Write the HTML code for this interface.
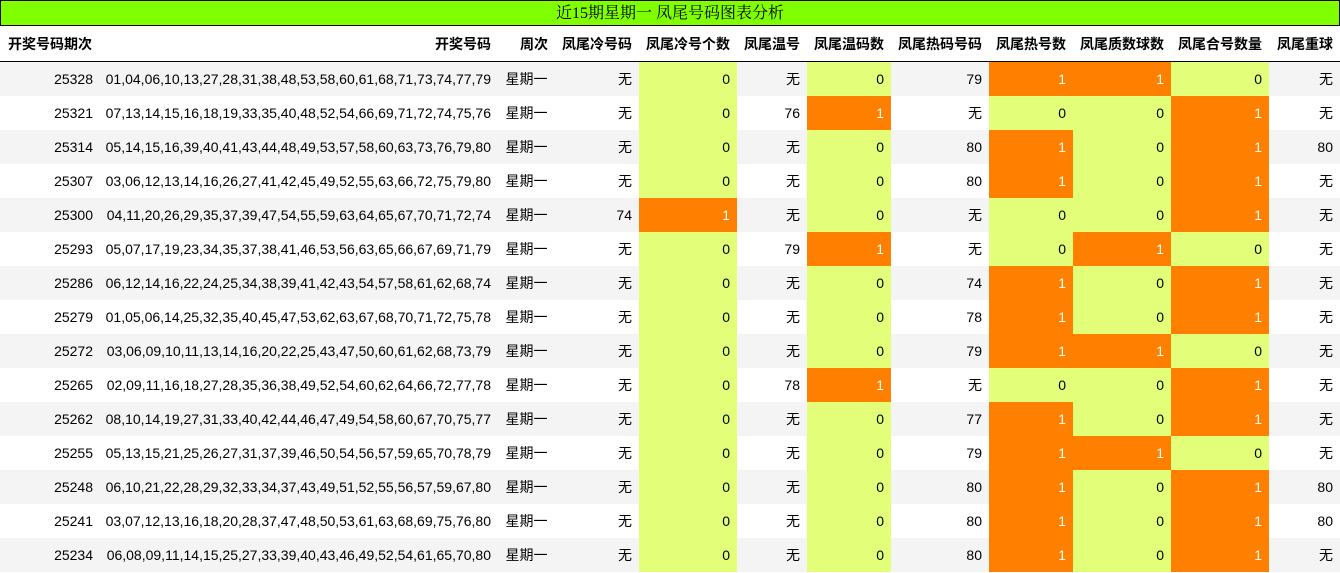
<!DOCTYPE html>
<html><head><meta charset="utf-8"><style>
body{margin:0;width:1340px;height:573px;overflow:hidden;background:#fff;font-family:"Liberation Sans","Noto Sans CJK SC",sans-serif;font-size:14px;color:#000}
.t{position:absolute;left:0;top:0;width:1338px;height:24px;background:#7fff00;border:1px solid #000;text-align:center;font-family:"Liberation Serif","Noto Serif CJK SC",serif;font-size:16px;line-height:26px}
table{position:absolute;left:0;top:26px;border-collapse:collapse;table-layout:fixed;width:1340px}
th{height:35px;font-weight:bold;text-align:right;padding:0 7px 0 0;border-bottom:1px solid #000;white-space:nowrap}
th.l{text-align:left;padding-left:8px}
td{height:34px;padding:0 7px 0 0;text-align:right;white-space:nowrap}
td.c{text-align:center;padding:0}
tr:nth-child(odd) td{background:#f4f4f4}
tr:nth-child(even) td{background:#fff}
tr td.y{background:#e3ff7a}
tr td.o{background:#ff8000;color:#fff}
</style></head><body>
<div class="t">近15期星期一 凤尾号码图表分析</div>
<table>
<colgroup><col style="width:100px"><col style="width:398px"><col style="width:57px"><col style="width:84px"><col style="width:98px"><col style="width:70px"><col style="width:84px"><col style="width:98px"><col style="width:84px"><col style="width:98px"><col style="width:98px"><col style="width:71px"></colgroup>
<thead><tr><th class="l">开奖号码期次</th><th>开奖号码</th><th>周次</th><th>凤尾冷号码</th><th>凤尾冷号个数</th><th>凤尾温号</th><th>凤尾温码数</th><th>凤尾热码号码</th><th>凤尾热号数</th><th>凤尾质数球数</th><th>凤尾合号数量</th><th>凤尾重球</th></tr></thead>
<tbody>
<tr><td>25328</td><td>01,04,06,10,13,27,28,31,38,48,53,58,60,61,68,71,73,74,77,79</td><td class="c">星期一</td><td>无</td><td class="y">0</td><td>无</td><td class="y">0</td><td>79</td><td class="o">1</td><td class="o">1</td><td class="y">0</td><td>无</td></tr>
<tr><td>25321</td><td>07,13,14,15,16,18,19,33,35,40,48,52,54,66,69,71,72,74,75,76</td><td class="c">星期一</td><td>无</td><td class="y">0</td><td>76</td><td class="o">1</td><td>无</td><td class="y">0</td><td class="y">0</td><td class="o">1</td><td>无</td></tr>
<tr><td>25314</td><td>05,14,15,16,39,40,41,43,44,48,49,53,57,58,60,63,73,76,79,80</td><td class="c">星期一</td><td>无</td><td class="y">0</td><td>无</td><td class="y">0</td><td>80</td><td class="o">1</td><td class="y">0</td><td class="o">1</td><td>80</td></tr>
<tr><td>25307</td><td>03,06,12,13,14,16,26,27,41,42,45,49,52,55,63,66,72,75,79,80</td><td class="c">星期一</td><td>无</td><td class="y">0</td><td>无</td><td class="y">0</td><td>80</td><td class="o">1</td><td class="y">0</td><td class="o">1</td><td>无</td></tr>
<tr><td>25300</td><td>04,11,20,26,29,35,37,39,47,54,55,59,63,64,65,67,70,71,72,74</td><td class="c">星期一</td><td>74</td><td class="o">1</td><td>无</td><td class="y">0</td><td>无</td><td class="y">0</td><td class="y">0</td><td class="o">1</td><td>无</td></tr>
<tr><td>25293</td><td>05,07,17,19,23,34,35,37,38,41,46,53,56,63,65,66,67,69,71,79</td><td class="c">星期一</td><td>无</td><td class="y">0</td><td>79</td><td class="o">1</td><td>无</td><td class="y">0</td><td class="o">1</td><td class="y">0</td><td>无</td></tr>
<tr><td>25286</td><td>06,12,14,16,22,24,25,34,38,39,41,42,43,54,57,58,61,62,68,74</td><td class="c">星期一</td><td>无</td><td class="y">0</td><td>无</td><td class="y">0</td><td>74</td><td class="o">1</td><td class="y">0</td><td class="o">1</td><td>无</td></tr>
<tr><td>25279</td><td>01,05,06,14,25,32,35,40,45,47,53,62,63,67,68,70,71,72,75,78</td><td class="c">星期一</td><td>无</td><td class="y">0</td><td>无</td><td class="y">0</td><td>78</td><td class="o">1</td><td class="y">0</td><td class="o">1</td><td>无</td></tr>
<tr><td>25272</td><td>03,06,09,10,11,13,14,16,20,22,25,43,47,50,60,61,62,68,73,79</td><td class="c">星期一</td><td>无</td><td class="y">0</td><td>无</td><td class="y">0</td><td>79</td><td class="o">1</td><td class="o">1</td><td class="y">0</td><td>无</td></tr>
<tr><td>25265</td><td>02,09,11,16,18,27,28,35,36,38,49,52,54,60,62,64,66,72,77,78</td><td class="c">星期一</td><td>无</td><td class="y">0</td><td>78</td><td class="o">1</td><td>无</td><td class="y">0</td><td class="y">0</td><td class="o">1</td><td>无</td></tr>
<tr><td>25262</td><td>08,10,14,19,27,31,33,40,42,44,46,47,49,54,58,60,67,70,75,77</td><td class="c">星期一</td><td>无</td><td class="y">0</td><td>无</td><td class="y">0</td><td>77</td><td class="o">1</td><td class="y">0</td><td class="o">1</td><td>无</td></tr>
<tr><td>25255</td><td>05,13,15,21,25,26,27,31,37,39,46,50,54,56,57,59,65,70,78,79</td><td class="c">星期一</td><td>无</td><td class="y">0</td><td>无</td><td class="y">0</td><td>79</td><td class="o">1</td><td class="o">1</td><td class="y">0</td><td>无</td></tr>
<tr><td>25248</td><td>06,10,21,22,28,29,32,33,34,37,43,49,51,52,55,56,57,59,67,80</td><td class="c">星期一</td><td>无</td><td class="y">0</td><td>无</td><td class="y">0</td><td>80</td><td class="o">1</td><td class="y">0</td><td class="o">1</td><td>80</td></tr>
<tr><td>25241</td><td>03,07,12,13,16,18,20,28,37,47,48,50,53,61,63,68,69,75,76,80</td><td class="c">星期一</td><td>无</td><td class="y">0</td><td>无</td><td class="y">0</td><td>80</td><td class="o">1</td><td class="y">0</td><td class="o">1</td><td>80</td></tr>
<tr><td>25234</td><td>06,08,09,11,14,15,25,27,33,39,40,43,46,49,52,54,61,65,70,80</td><td class="c">星期一</td><td>无</td><td class="y">0</td><td>无</td><td class="y">0</td><td>80</td><td class="o">1</td><td class="y">0</td><td class="o">1</td><td>无</td></tr>
</tbody></table>
</body></html>
